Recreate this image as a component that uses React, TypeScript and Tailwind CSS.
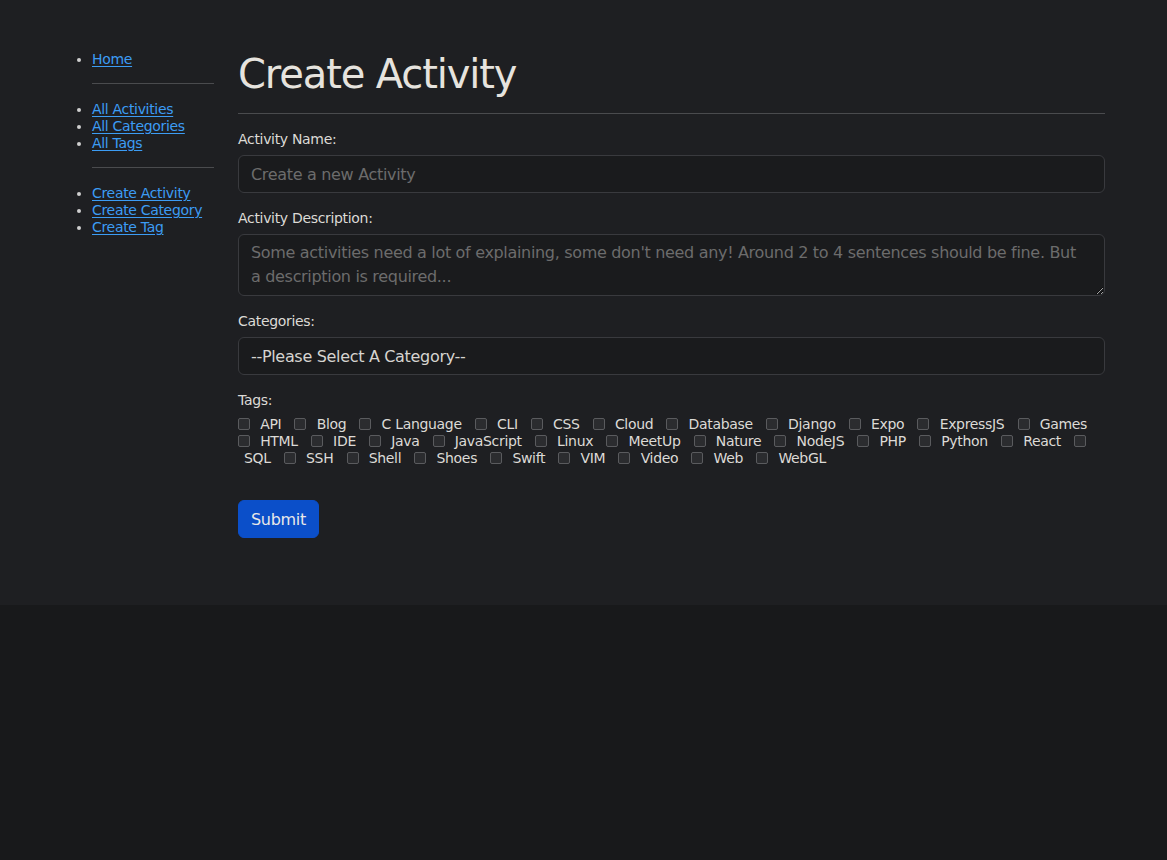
import { useState } from 'react';

const TAGS = [
  'API', 'Blog', 'C Language', 'CLI', 'CSS', 'Cloud', 'Database', 'Django', 'Expo', 'ExpressJS', 'Games',
  'HTML', 'IDE', 'Java', 'JavaScript', 'Linux', 'MeetUp', 'Nature', 'NodeJS', 'PHP', 'Python', 'React',
  'SQL', 'SSH', 'Shell', 'Shoes', 'Swift', 'VIM', 'Video', 'Web', 'WebGL',
];

const linkCls = 'text-[#3c9cf4] underline underline-offset-2';
const fieldCls =
  'mt-[7px] block w-full rounded-[6px] border border-[#393a3e] bg-[#1a1b1d] px-[12px] text-[16px] tracking-[-0.02em] outline-none';

export default function App() {
  const [checked, setChecked] = useState<Record<string, boolean>>({});

  return (
    <div
      className="min-h-screen bg-[#18191b] text-[#dcdad6] tracking-[-0.02em]"
      style={{ fontFamily: '"DejaVu Sans", "Liberation Sans", sans-serif' }}
    >
      <div className="bg-[#1e1f22] pt-[50px] pb-[67px] pl-[52px] pr-[62px] flex gap-[24px]">
        {/* Sidebar */}
        <nav className="w-[162px] shrink-0 pt-[1px] text-[14px] leading-[17px]">
          <ul className="list-disc pl-10 marker:text-[#cfcfcf]">
            <li><a href="#" className={linkCls}>Home</a></li>
          </ul>
          <hr className="ml-10 mt-[15px] mb-[17px] border-t border-[#4a4b4e]" />
          <ul className="list-disc pl-10 marker:text-[#cfcfcf]">
            <li><a href="#" className={linkCls}>All Activities</a></li>
            <li><a href="#" className={linkCls}>All Categories</a></li>
            <li><a href="#" className={linkCls}>All Tags</a></li>
          </ul>
          <hr className="ml-10 mt-[15px] mb-[17px] border-t border-[#4a4b4e]" />
          <ul className="list-disc pl-10 marker:text-[#cfcfcf]">
            <li><a href="#" className={linkCls}>Create Activity</a></li>
            <li><a href="#" className={linkCls}>Create Category</a></li>
            <li><a href="#" className={linkCls}>Create Tag</a></li>
          </ul>
        </nav>

        {/* Main */}
        <main className="flex-1 min-w-0">
          <h1 className="text-[40px] leading-[48px] tracking-[-0.028em] text-[#e6e3de]">Create Activity</h1>
          <hr className="mt-[15px] border-t border-[#4a4b4e]" />

          <form className="text-[14px] leading-[17px]" onSubmit={(e) => e.preventDefault()}>
            <label className="block mt-[17px]">Activity Name:</label>
            <input
              type="text"
              placeholder="Create a new Activity"
              className={`${fieldCls} h-[38px] text-[#dcdad6] placeholder:text-[#6c6c6c]`}
            />

            <label className="block mt-[17px]">Activity Description:</label>
            <textarea
              rows={2}
              placeholder="Some activities need a lot of explaining, some don't need any! Around 2 to 4 sentences should be fine. But a description is required..."
              className={`${fieldCls} h-[62px] py-[6px] pr-[20px] leading-[24px] text-[#dcdad6] placeholder:text-[#6c6c6c]`}
            />

            <label className="block mt-[17px]">Categories:</label>
            <select
              className={`${fieldCls} h-[38px] text-[#d6d4d0] appearance-none`}
              defaultValue=""
            >
              <option value="">--Please Select A Category--</option>
            </select>

            <label className="block mt-[17px]">Tags:</label>
            <div className="mt-[7px]">
              {TAGS.map((t) => (
                <span key={t}>
                  <input
                    type="checkbox"
                    checked={!!checked[t]}
                    onChange={() => setChecked((c) => ({ ...c, [t]: !c[t] }))}
                    className="appearance-none inline-block align-[-1px] w-[12px] h-[12px] rounded-[2px] border border-[#5a5b5e] bg-[#2b2c2f] checked:bg-[#0b4fc9]"
                  />{' '}
                  <label className="ml-[6px] mr-[9px]">{t}</label>{' '}
                </span>
              ))}
            </div>

            <button
              type="submit"
              className="mt-[33px] h-[38px] px-[12px] rounded-[6px] bg-[#0b4fc9] border border-[#0b4fc9] text-[16px] text-[#e8e8e8]"
            >
              Submit
            </button>
          </form>
        </main>
      </div>
    </div>
  );
}
